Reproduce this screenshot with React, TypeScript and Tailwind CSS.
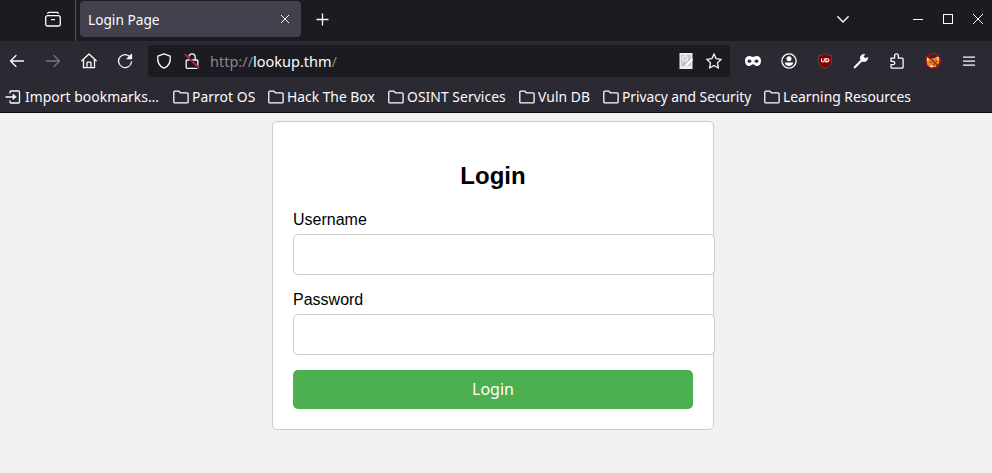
import type { ReactNode } from "react";

function Icon({ children, className = "" }: { children: ReactNode; className?: string }) {
  return (
    <svg
      width="16"
      height="16"
      viewBox="0 0 16 16"
      fill="none"
      stroke="currentColor"
      strokeWidth="1.3"
      strokeLinecap="round"
      strokeLinejoin="round"
      className={`shrink-0 ${className}`}
    >
      {children}
    </svg>
  );
}

function NavButton({ children }: { children: ReactNode }) {
  return <div className="flex h-8 w-9 shrink-0 items-center justify-center">{children}</div>;
}

function TitleBar() {
  return (
    <div className="flex h-[41px] bg-[#1c1b22]">
      <div className="flex h-[38px] w-[75px] shrink-0 items-center pl-[45px]">
        <Icon>
          <path d="M2.800 2.300c.2-.7.600-.9 1.200-.9h8c.6 0 1 .2 1.200.9M2.500 4.700h11a1.800 1.800 0 0 1 1.800 1.800v6.700a1.800 1.800 0 0 1-1.800 1.800h-11a1.800 1.800 0 0 1-1.800-1.800V6.500a1.800 1.800 0 0 1 1.800-1.800zM6.500 8.600h3" />
        </Icon>
      </div>
      <div className="h-full w-px bg-[#55545c]" />
      <div className="mt-px ml-1 flex h-9 w-[221px] items-center rounded-[4px] bg-[#42414d] pr-[11px] pl-2">
        <span className="flex-1 pt-px text-[13.7px] leading-5 whitespace-nowrap">Login Page</span>
        <svg width="10" height="10" viewBox="0 0 10 10" stroke="currentColor" strokeWidth="1" className="-mt-px">
          <path d="M1 1l8 8M9 1L1 9" />
        </svg>
      </div>
      <div className="flex h-[39px] w-[42px] items-center justify-center">
        <svg width="13" height="13" viewBox="0 0 13 13" stroke="currentColor" strokeWidth="1.3">
          <path d="M6.500 .5v12M.5 6.500h12" />
        </svg>
      </div>
      <div className="ml-auto flex h-[38px] items-center">
        <svg width="12" height="7" viewBox="0 0 12 7" fill="none" stroke="currentColor" strokeWidth="1.4" strokeLinecap="round" strokeLinejoin="round" className="mr-[64px]">
          <path d="M.8.8L6 6L11.200.8" />
        </svg>
        <div className="mr-5 h-px w-[10px] bg-[#fbfbfe]" />
        <div className="mr-5 size-[10px] border border-[#fbfbfe]" />
        <svg width="10" height="10" viewBox="0 0 10 10" stroke="currentColor" strokeWidth="1" className="mr-[9px]">
          <path d="M0 0l10 10M10 0L0 10" />
        </svg>
      </div>
    </div>
  );
}

function AddressBar() {
  return (
    <div className="ml-[5px] flex h-8 w-[582px] shrink-0 items-center rounded-[4px] bg-[#1c1b22] px-2">
      <Icon>
        <path d="M8 .9l6.200 2.300c.5 5-1 10-6.200 12c-5.200-2-6.700-7-6.200-12z" />
      </Icon>
      <Icon className="ml-3">
        <path d="M4.800 6.500V4a3.200 3.200 0 0 1 6.400 0v2.500M3.200 7h9.600a1 1 0 0 1 1 1v6.300a1 1 0 0 1-1 1H3.200a1 1 0 0 1-1-1V8a1 1 0 0 1 1-1z" />
        <path d="M1.800 1.800l13 13.300" stroke="#1c1b22" strokeWidth="2.400" />
        <path d="M1.200 1.500l13.800 13.500" stroke="#e22850" />
      </Icon>
      <span className="ml-[10px] text-[14.500px] leading-5 whitespace-nowrap text-[#87868d]">
        http://<span className="text-[#fbfbfe]">lookup.thm</span>/
      </span>
      <svg width="16" height="16" viewBox="0 0 16 16" className="mr-3 ml-auto">
        <path d="M1.500 0h13v16h-13z" fill="#ececec" />
        <path d="M3 2h10v11H3z" fill="#c9c9cb" />
        <circle cx="7" cy="5.500" r="2.700" fill="#d4d4d6" stroke="#f4f4f4" />
        <path d="M4.500 12.500c1-3 3.500-3 5-1" stroke="#b4b4b7" fill="none" />
        <path d="M8 12.500l6.500-6.500" stroke="#fff" strokeWidth="1.800" />
      </svg>
      <Icon>
        <path d="M8 .9l2.150 4.750 5.050.65-3.700 3.550.95 5.150L8 12.500 3.550 15l.95-5.150L.8 6.300l5.050-.65z" />
      </Icon>
    </div>
  );
}

function Toolbar() {
  return (
    <div className="flex h-10 items-center">
      <div className="-ml-px flex w-36 shrink-0">
        <NavButton>
          <Icon><path d="M14.500 8H1.500M7 2.500L1.500 8L7 13.500" /></Icon>
        </NavButton>
        <NavButton>
          <Icon className="text-[#76757d]"><path d="M1.500 8h13M9 2.500L14.500 8L9 13.500" /></Icon>
        </NavButton>
        <NavButton>
          <Icon><path d="M.8 7.800L8 1l7.200 6.800M2.500 6.500v8.200h11V6.500M6 14.500V10a.8.8 0 0 1 .8-.8h2.400a.8.8 0 0 1 .8.8v4.500" /></Icon>
        </NavButton>
        <NavButton>
          <Icon>
            <path d="M13.500 4.500A6.500 6.500 0 1 0 14.500 9" />
            <path d="M14.500 1.500v4.200h-4.200z" fill="currentColor" />
          </Icon>
        </NavButton>
      </div>
      <AddressBar />
      <div className="ml-[5px] flex">
        <NavButton>
          <svg width="16" height="16" viewBox="0 0 16 16" fill="#fbfbfe" fillRule="evenodd">
            <path d="M0 7.500C0 4.500 2 3 4.300 3c1.700 0 2.500 1 3.700 1s2-1 3.700-1C14 3 16 4.500 16 7.500c0 3.300-1.500 5.500-4.200 5.500C10 13 9.200 11.300 8 11.300S6 13 4.200 13C1.500 13 0 10.800 0 7.500zM2.400 8.200c.6 1.900 3.300 2 4.300.4C5.900 6.200 3.500 5.700 2.400 8.200zM13.600 8.200c-.6 1.900-3.300 2-4.300.4.800-2.400 3.200-2.900 4.300-.4z" />
          </svg>
        </NavButton>
        <NavButton>
          <Icon>
            <circle cx="8" cy="8" r="7.100" />
            <circle cx="8" cy="5.800" r="2.500" fill="currentColor" stroke="none" />
            <path d="M3.700 9.500h8.600c-.3 2-2 3.500-4.300 3.500s-4-1.500-4.300-3.500z" fill="currentColor" stroke="none" />
          </Icon>
        </NavButton>
        <NavButton>
          <svg width="16" height="16" viewBox="0 0 16 16">
            <path d="M8 .4c2 1.500 4.200 2 6.600 2v5.200c0 3.500-2 6-6.600 8-4.600-2-6.600-4.500-6.600-8V2.400c2.400 0 4.600-.5 6.600-2z" fill="#800000" stroke="#65545a" strokeWidth=".7" />
            <path d="M4.500 5.500v2.300c0 1.600 2.800 1.600 2.800 0V5.500M8.800 5.500v3.400c1.600 0 3-.3 3-1.700s-1.300-1.700-3-1.700z" fill="none" stroke="#fff" strokeWidth="1.100" />
          </svg>
        </NavButton>
        <NavButton>
          <Icon>
            <path d="M1.800 14.200L8.500 7.500" strokeWidth="2.300" />
            <path d="M7.400 4.900C7.400 2.700 9 1.100 11.700 1.300L10.400 3.700l1.900 1.900 2.500-1.200c.1 2.600-1.600 4.200-3.700 4.200-2.100 0-3.700-1.600-3.700-3.700z" fill="currentColor" strokeWidth=".7" />
          </Icon>
        </NavButton>
        <NavButton>
          <Icon>
            <path d="M2 5.200h3.600V2.700a1.900 1.900 0 0 1 3.800 0v2.500h3.700a1 1 0 0 1 1 1v8a1 1 0 0 1-1 1H3a1 1 0 0 1-1-1v-2.600h2.100a1.650 1.650 0 0 0 0-3.300H2z" />
          </Icon>
        </NavButton>
        <NavButton>
          <svg width="16" height="16" viewBox="0 0 16 16">
            <path d="M1 3.500l4 2.500 4.500-1L14 2.500l.5 5.500-.8 3-3.200 3-5 .8-3.300-2z" fill="#e88723" />
            <path d="M1 3.500l3 2.800-1.500 2zM14 2.500l-2.200 2.500 2.500 3zM5.500 12.200l3 .8-1.500 1.800-2.800-1.300z" fill="#f7e6d4" />
            <path d="M5 9l1.800.8M10.500 8l1.500.8M8 11.500l1.800-.5" stroke="#543017" />
            <circle cx="8" cy="8" r="7.300" fill="none" stroke="#b80c13" strokeWidth="1.200" />
            <path d="M3 3l10 10" stroke="#b80c13" strokeWidth="1.300" />
          </svg>
        </NavButton>
        <NavButton>
          <svg width="12" height="11" viewBox="0 0 12 11" fill="none" stroke="currentColor" strokeWidth="1.200">
            <path d="M0 1.200h12M0 5.200h12M0 9.200h12" />
          </svg>
        </NavButton>
      </div>
    </div>
  );
}

function Folder({ label, className }: { label: string; className: string }) {
  return (
    <div className={`flex shrink-0 items-center ${className}`}>
      <Icon className="mr-[3px]">
        <path d="M.8 3.100a1 1 0 0 1 1-1H5.600l2 1.800h6.500a1 1 0 0 1 1 1v8a1 1 0 0 1-1 1H1.800a1 1 0 0 1-1-1z" />
      </Icon>
      <span>{label}</span>
    </div>
  );
}

function BookmarksBar() {
  return (
    <div className="flex h-[31px] items-center pl-[5px] text-[13.850px] leading-5 whitespace-nowrap">
      <div className="flex w-[168px] shrink-0 items-center">
        <Icon className="mr-1">
          <path d="M5 4V3a1 1 0 0 1 1-1h7.500a1 1 0 0 1 1 1v10a1 1 0 0 1-1 1H6a1 1 0 0 1-1-1v-1M1 8h9" />
          <path d="M8 5.500v5l3-2.500z" fill="currentColor" strokeWidth=".8" />
        </Icon>
        <span className="tracking-[0.060px]">Import bookmarks…</span>
      </div>
      <Folder label="Parrot OS" className="w-[95px] tracking-[0.080px]" />
      <Folder label="Hack The Box" className="w-[120px]" />
      <Folder label="OSINT Services" className="w-[131px] tracking-[0.070px]" />
      <Folder label="Vuln DB" className="w-[84px] tracking-[0.080px]" />
      <Folder label="Privacy and Security" className="w-[161px] tracking-[-0.050px]" />
      <Folder label="Learning Resources" className="w-[150px]" />
    </div>
  );
}

function LoginForm() {
  return (
    <form className="ml-[272px] h-[309px] w-[442px] rounded-[5px] border border-[#ccc] bg-white px-5 pt-10 text-[16px] leading-[18px] text-black">
      <h2 className="mb-[21px] text-center text-[24px] leading-7 font-bold">Login</h2>
      <label htmlFor="username" className="block">Username</label>
      <input id="username" type="text" className="mt-[5px] mb-4 block h-[41px] w-[422px] rounded-[5px] border border-[#ccc] bg-white px-2" />
      <label htmlFor="password" className="block">Password</label>
      <input id="password" type="password" className="mt-[5px] mb-[15px] block h-[41px] w-[422px] rounded-[5px] border border-[#ccc] bg-white px-2" />
      <button type="button" className="block h-[39px] w-full rounded-[5px] bg-[#4caf50] pb-0.5 font-['Noto_Sans',sans-serif] text-[16px] text-white">
        Login
      </button>
    </form>
  );
}

export default function App() {
  return (
    <div className="h-[473px] w-[992px] overflow-hidden bg-[#f1f1f1] font-['Liberation_Sans',Arial,sans-serif]">
      <header className="h-[113px] border-b border-[#0c0c0d] bg-[#2b2a33] font-['Noto_Sans',sans-serif] text-[#fbfbfe]">
        <TitleBar />
        <Toolbar />
        <BookmarksBar />
      </header>
      <main className="pt-2">
        <LoginForm />
      </main>
    </div>
  );
}
